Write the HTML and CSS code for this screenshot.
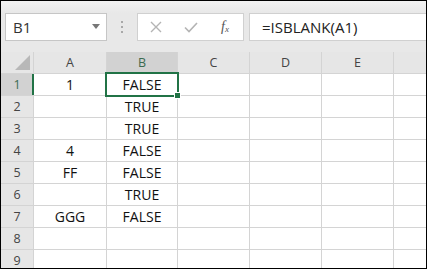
FILE: index.html
```html
<!DOCTYPE html>
<html lang="en">
<head>
    <meta charset="UTF-8">
    <title>ISBLANK</title>
    <link rel="stylesheet" href="styles.css">
</head>
<body>

    <div class="window">
        <div class="formula-bar">
            <div class="name-box">
                <span>B1</span>
                <svg class="drop" width="8" height="5" viewBox="0 0 8 5"><path d="M0 0H8L4 5Z" fill="#777"/></svg>
            </div>
            <div class="dots"><i></i><i></i><i></i></div>
            <div class="fx-buttons">
                <svg width="14" height="14" viewBox="0 0 14 14"><path d="M2 2L12 12M12 2L2 12" stroke="#b4b4b4" stroke-width="1.4"/></svg>
                <svg width="16" height="14" viewBox="0 0 16 14"><path d="M2 7.5L6 11.5L14 3" stroke="#b4b4b4" stroke-width="1.6" fill="none"/></svg>
                <span class="fx">f<sub>x</sub></span>
            </div>
            <div class="formula">=ISBLANK(A1)</div>
        </div>

        <div class="grid">
            <div class="corner"><svg width="15" height="15" viewBox="0 0 15 15"><path d="M15 0V15H0Z" fill="#b8b8b8"/></svg></div>
            <div class="col-head">A</div>
            <div class="col-head selected">B</div>
            <div class="col-head">C</div>
            <div class="col-head">D</div>
            <div class="col-head">E</div>
            <div class="col-head"></div>

            <div class="row-head selected">1</div>
            <div class="cell">1</div>
            <div class="cell active">FALSE</div>
            <div class="cell"></div><div class="cell"></div><div class="cell"></div><div class="cell"></div>

            <div class="row-head">2</div>
            <div class="cell"></div>
            <div class="cell">TRUE</div>
            <div class="cell"></div><div class="cell"></div><div class="cell"></div><div class="cell"></div>

            <div class="row-head">3</div>
            <div class="cell"></div>
            <div class="cell">TRUE</div>
            <div class="cell"></div><div class="cell"></div><div class="cell"></div><div class="cell"></div>

            <div class="row-head">4</div>
            <div class="cell">4</div>
            <div class="cell">FALSE</div>
            <div class="cell"></div><div class="cell"></div><div class="cell"></div><div class="cell"></div>

            <div class="row-head">5</div>
            <div class="cell">FF</div>
            <div class="cell">FALSE</div>
            <div class="cell"></div><div class="cell"></div><div class="cell"></div><div class="cell"></div>

            <div class="row-head">6</div>
            <div class="cell"></div>
            <div class="cell">TRUE</div>
            <div class="cell"></div><div class="cell"></div><div class="cell"></div><div class="cell"></div>

            <div class="row-head">7</div>
            <div class="cell">GGG</div>
            <div class="cell">FALSE</div>
            <div class="cell"></div><div class="cell"></div><div class="cell"></div><div class="cell"></div>

            <div class="row-head">8</div>
            <div class="cell"></div><div class="cell"></div>
            <div class="cell"></div><div class="cell"></div><div class="cell"></div><div class="cell"></div>

            <div class="row-head">9</div>
            <div class="cell"></div><div class="cell"></div>
            <div class="cell"></div><div class="cell"></div><div class="cell"></div><div class="cell"></div>
        </div>
    </div>

</body>
</html>
```

FILE: styles.css
```css
body {
    margin: 0;
    font-family: 'Open Sans', 'Noto Sans', sans-serif;
    background-color: white;
}

.window {
    width: 427px;
    height: 269px;
    box-sizing: border-box;
    border: 1px solid #000;
    overflow: hidden;
    background-color: #e9e9e9;
}

/* Formula bar */
.formula-bar {
    display: flex;
    align-items: center;
    height: 51px;
    padding: 0 0 0 4px;
    background: linear-gradient(#f2f2f2, #e8e8e8 12px);
}

.name-box {
    display: flex;
    align-items: center;
    justify-content: space-between;
    width: 102px;
    height: 28px;
    box-sizing: border-box;
    padding: 0 6px 0 7px;
    background-color: #fff;
    border: 1px solid #c6c6c6;
    font-size: 15px;
    color: #333;
}

.dots {
    display: flex;
    flex-direction: column;
    gap: 3px;
    margin: 0 14px 0 14px;
}

.dots i {
    width: 2px;
    height: 2px;
    background-color: #a8a8a8;
}

.fx-buttons {
    display: flex;
    align-items: center;
    gap: 20px;
    width: 107px;
    height: 28px;
    box-sizing: border-box;
    padding-left: 11px;
    background-color: #fff;
    border: 1px solid #d0d0d0;
}

.fx {
    font-family: 'Liberation Serif', serif;
    font-style: italic;
    font-size: 14px;
    color: #555;
    margin-left: 2px;
}

.fx sub {
    font-size: 9px;
    vertical-align: -1px;
}

.formula {
    flex: 1;
    height: 28px;
    box-sizing: border-box;
    margin-left: 5px;
    padding-left: 12px;
    line-height: 26px;
    background-color: #fff;
    border: 1px solid #d0d0d0;
    border-right: none;
    font-size: 15px;
    color: #222;
}

/* Sheet grid */
.grid {
    display: grid;
    grid-template-columns: 32px 72px 70px 71px 71px 71px 40px;
    grid-template-rows: 21px repeat(9, 21px);
    gap: 1px;
    background-color: #d4d4d4;
}

.corner {
    display: flex;
    align-items: flex-end;
    justify-content: flex-end;
    padding: 0 3px 3px 0;
    background-color: #e6e6e6;
}

.col-head, .row-head {
    display: flex;
    align-items: center;
    justify-content: center;
    background-color: #e6e6e6;
    font-size: 12.5px;
    color: #444;
}

.col-head.selected, .row-head.selected {
    background-color: #d2d2d2;
    color: #3c6b50;
}

.row-head.selected {
    box-shadow: 1px 0 0 #217346, inset -1px 0 0 #217346;
}

.cell {
    display: flex;
    align-items: center;
    justify-content: center;
    background-color: #fff;
    font-size: 14px;
    color: #111;
}

.cell.active {
    position: relative;
}

.cell.active::after {
    content: '';
    position: absolute;
    inset: -2px;
    border: 2px solid #217346;
}

.cell.active::before {
    content: '';
    position: absolute;
    right: -4px;
    bottom: -4px;
    width: 5px;
    height: 5px;
    background-color: #217346;
    border: 1px solid #fff;
    z-index: 1;
}
```
